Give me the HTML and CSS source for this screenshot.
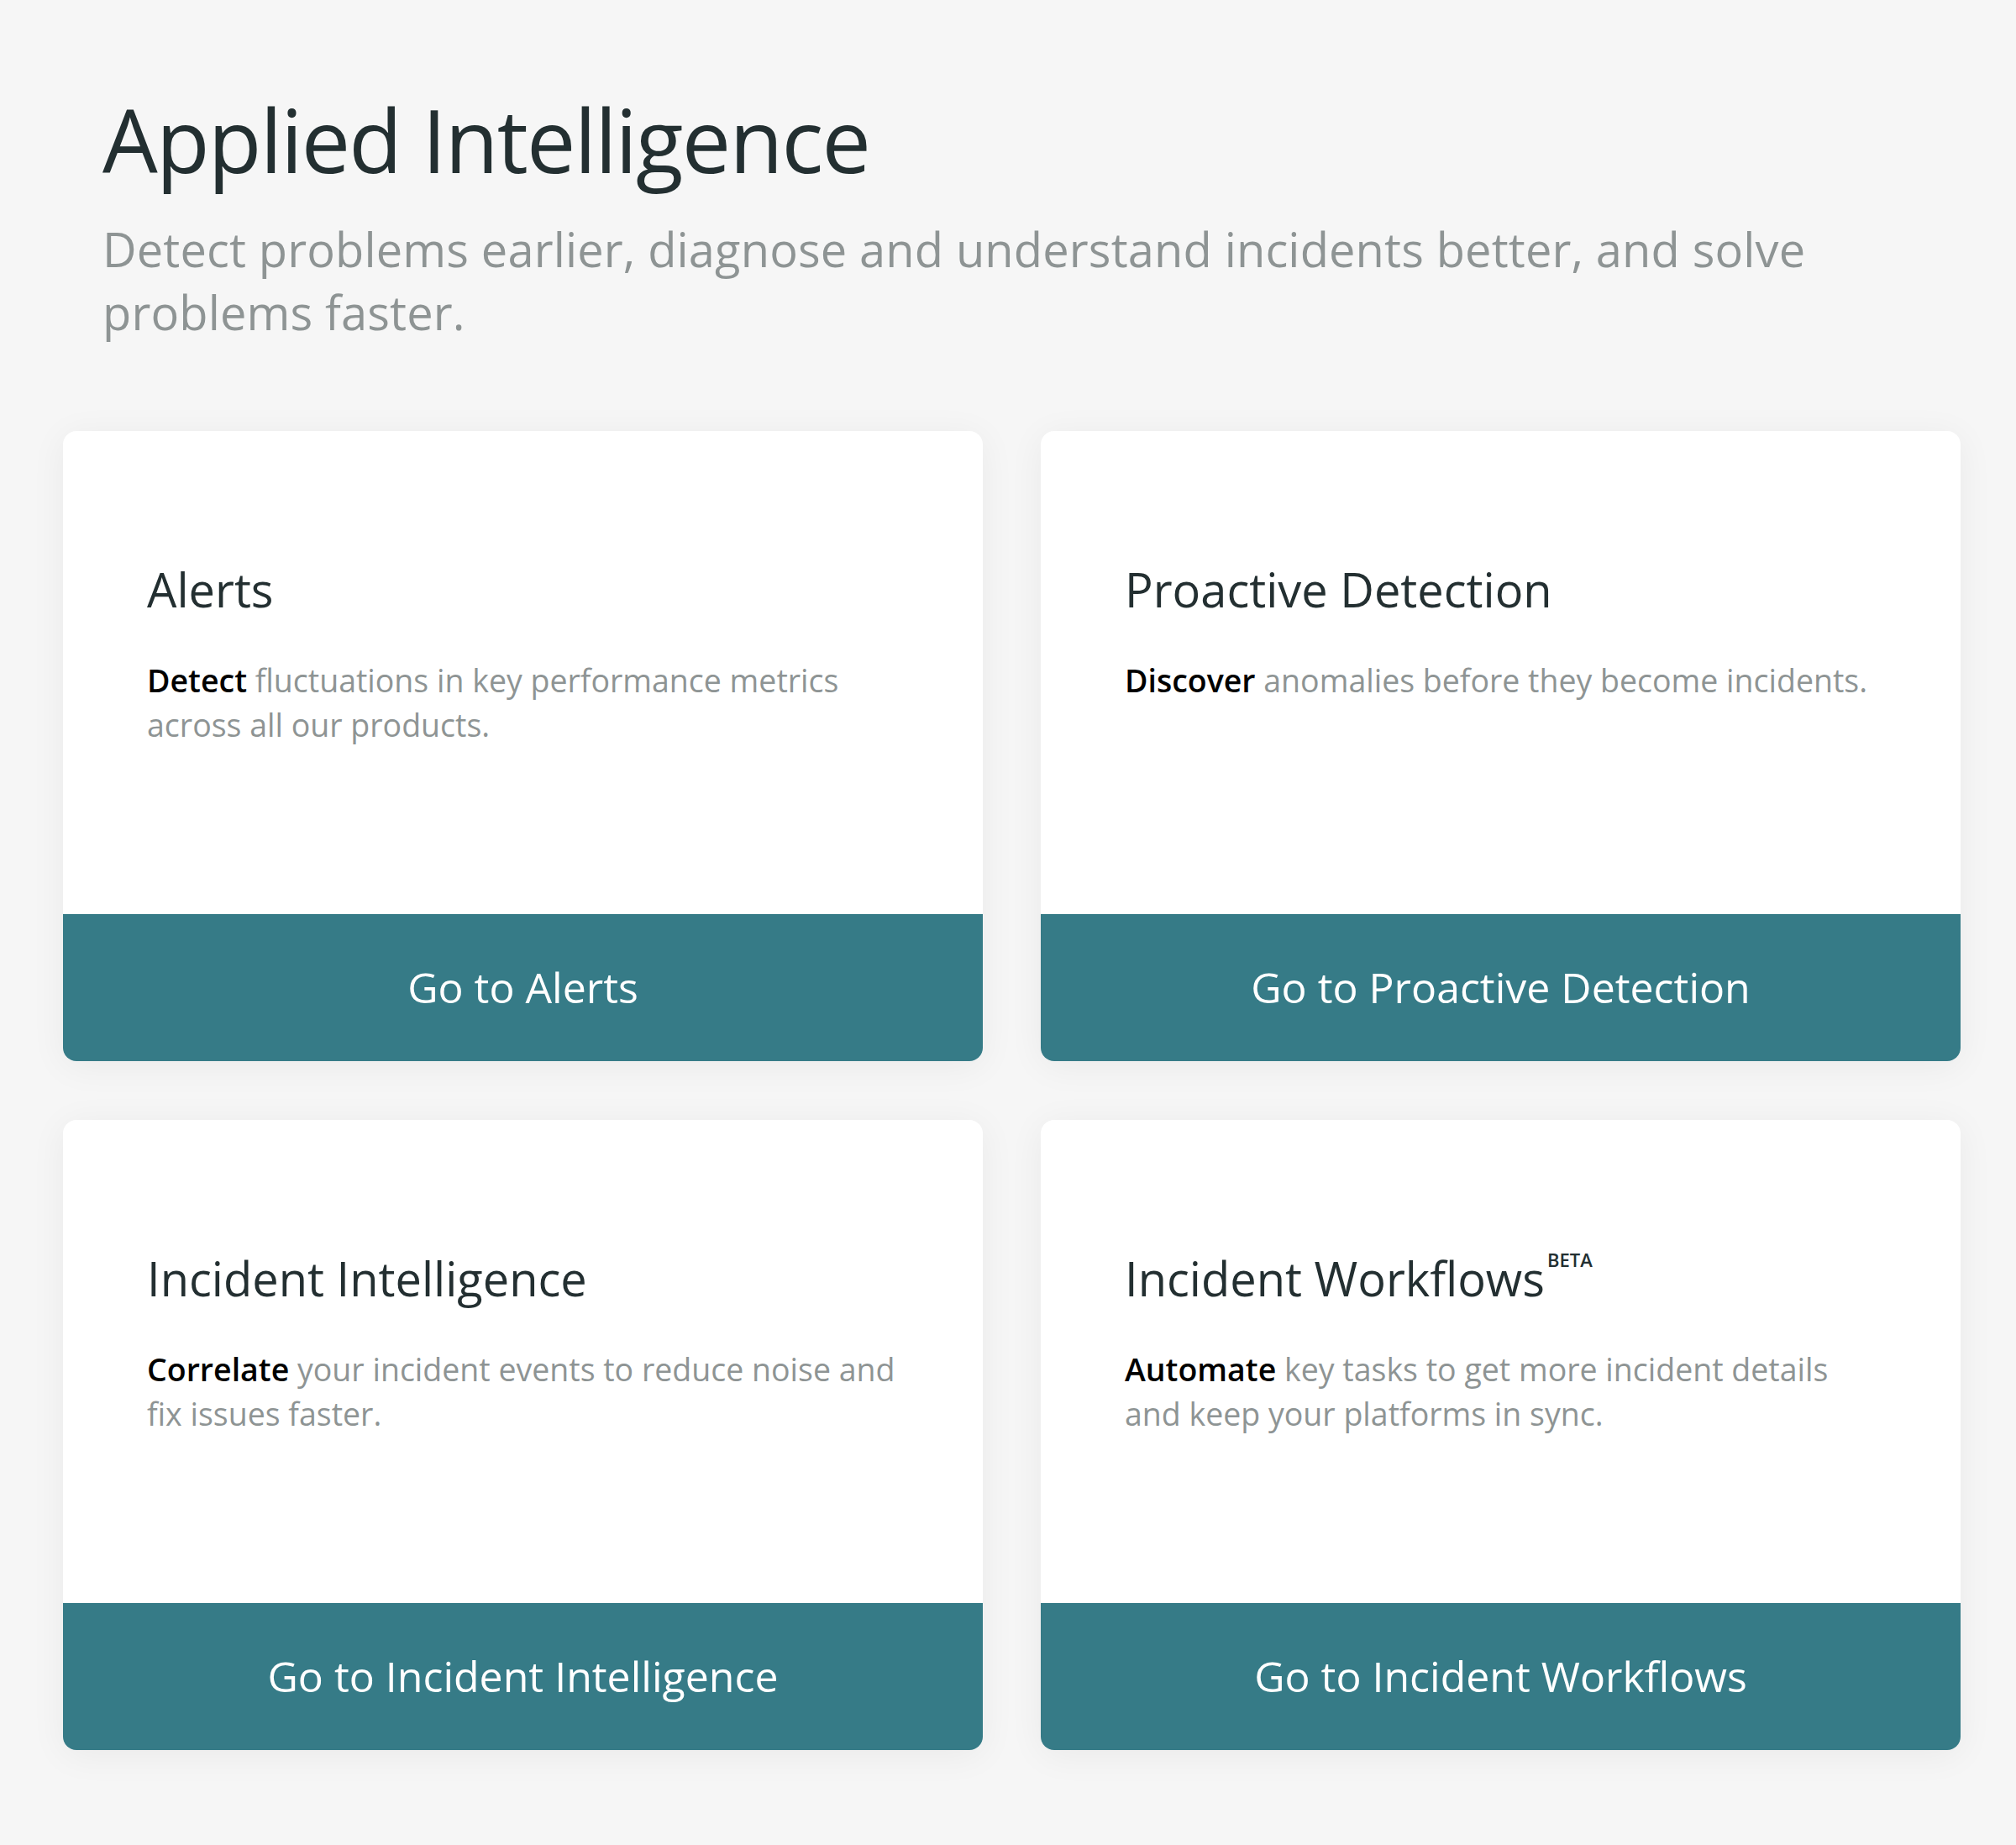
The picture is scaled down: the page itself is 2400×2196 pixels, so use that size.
FILE: index.html
```html
<!DOCTYPE html>
<html lang="en">
<head>
<meta charset="utf-8">
<title>Applied Intelligence</title>
<link rel="stylesheet" href="styles.css">
</head>
<body>
<main class="page">
  <header class="intro">
    <h1 class="intro-title">Applied Intelligence</h1>
    <p class="intro-sub">Detect problems earlier, diagnose and understand incidents better, and solve problems faster.</p>
  </header>
  <section class="grid">
    <article class="card">
      <div class="card-body">
        <h2 class="card-title">Alerts</h2>
        <p class="card-text"><strong>Detect</strong> fluctuations in key performance metrics across all our products.</p>
      </div>
      <a class="card-btn" href="#">Go to Alerts</a>
    </article>
    <article class="card">
      <div class="card-body">
        <h2 class="card-title">Proactive Detection</h2>
        <p class="card-text"><strong>Discover</strong> anomalies before they become incidents.</p>
      </div>
      <a class="card-btn" href="#">Go to Proactive Detection</a>
    </article>
    <article class="card">
      <div class="card-body">
        <h2 class="card-title">Incident Intelligence</h2>
        <p class="card-text"><strong>Correlate</strong> your incident events to reduce noise and fix issues faster.</p>
      </div>
      <a class="card-btn" href="#">Go to Incident Intelligence</a>
    </article>
    <article class="card">
      <div class="card-body">
        <h2 class="card-title">Incident Workflows<sup class="beta">BETA</sup></h2>
        <p class="card-text"><strong>Automate</strong> key tasks to get more incident details and keep your platforms in sync.</p>
      </div>
      <a class="card-btn" href="#">Go to Incident Workflows</a>
    </article>
  </section>
</main>
</body>
</html>
```
FILE: styles.css
```css
html, body {
  margin: 0;
  padding: 0;
}
body {
  background: #f6f6f6;
  font-family: "Open Sans", "Noto Sans", sans-serif;
  color: #232f31;
}
.page {
  padding: 104px 66px 113px 75px;
}
.intro {
  padding-left: 47px;
  margin-bottom: 104px;
}
.intro-title {
  margin: 0;
  font-size: 104px;
  line-height: 1.2;
  font-weight: 400;
  letter-spacing: -0.017em;
  color: #232f31;
}
.intro-sub {
  margin: 30px 0 0;
  font-size: 56px;
  line-height: 75px;
  letter-spacing: 0.14px;
  color: #8e9494;
  font-weight: 400;
}
.grid {
  display: grid;
  grid-template-columns: 1fr 1fr;
  column-gap: 69px;
  row-gap: 70px;
}
.card {
  background: #fff;
  border-radius: 16px;
  box-shadow: 0 6px 44px rgba(0, 0, 0, 0.055);
  display: flex;
  flex-direction: column;
  height: 750px;
  overflow: hidden;
}
.card-body {
  flex: 1;
  padding: 155px 96px 0 100px;
}
.card-title {
  margin: 0;
  font-size: 56px;
  line-height: 1.2;
  font-weight: 400;
  color: #232f31;
}
.beta {
  font-size: 22px;
  font-weight: 600;
  line-height: 0;
  vertical-align: 35px;
  margin-left: 3px;
  color: #232f31;
}
.card-text {
  margin: 48px 0 0;
  font-size: 37.5px;
  line-height: 53px;
  color: #8e9494;
}
.card-text strong {
  color: #000;
  font-weight: 600;
}
.card-btn {
  height: 175px;
  flex: 0 0 175px;
  background: #367b87;
  color: #fff;
  text-decoration: none;
  display: flex;
  align-items: center;
  justify-content: center;
  font-size: 50px;
}
```
